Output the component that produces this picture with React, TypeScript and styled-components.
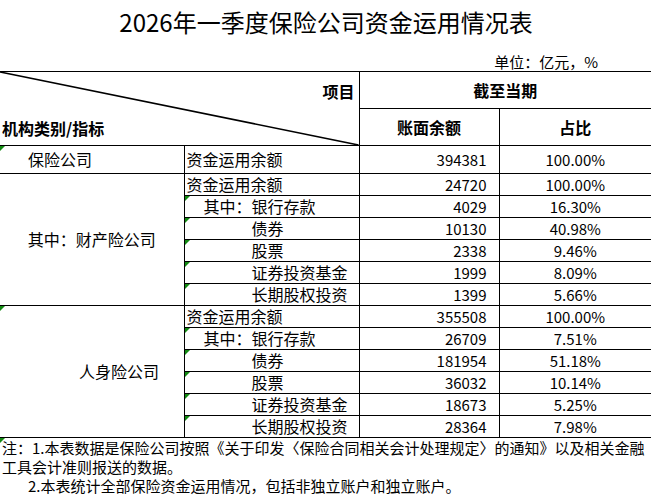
import React from 'react';
import styled, { createGlobalStyle } from 'styled-components';

type Item = { name: string; indent: number; amount: number; share: string; flag?: boolean };
type Group = { title: string; titleIndent?: number; flag?: boolean; height: number; rows: Item[] };

const GlobalStyle = createGlobalStyle`
  html, body {
    margin: 0;
    padding: 0;
    background: #ffffff;
  }
`;

const groups: Group[] = [
  {
    title: '保险公司',
    titleIndent: 28,
    flag: true,
    height: 28,
    rows: [{ name: '资金运用余额', indent: 2, amount: 394381, share: '100.00%' }],
  },
  {
    title: '其中：财产险公司',
    height: 22,
    rows: [
      { name: '资金运用余额', indent: 2, amount: 24720, share: '100.00%' },
      { name: '其中：银行存款', indent: 19, amount: 4029, share: '16.30%', flag: true },
      { name: '债券', indent: 67, amount: 10130, share: '40.98%', flag: true },
      { name: '股票', indent: 67, amount: 2338, share: '9.46%', flag: true },
      { name: '证券投资基金', indent: 67, amount: 1999, share: '8.09%', flag: true },
      { name: '长期股权投资', indent: 67, amount: 1399, share: '5.66%', flag: true },
    ],
  },
  {
    title: '人身险公司',
    titleIndent: 79,
    flag: true,
    height: 22,
    rows: [
      { name: '资金运用余额', indent: 2, amount: 355508, share: '100.00%' },
      { name: '其中：银行存款', indent: 19, amount: 26709, share: '7.51%', flag: true },
      { name: '债券', indent: 67, amount: 181954, share: '51.18%', flag: true },
      { name: '股票', indent: 67, amount: 36032, share: '10.14%', flag: true },
      { name: '证券投资基金', indent: 67, amount: 18673, share: '5.25%', flag: true },
      { name: '长期股权投资', indent: 67, amount: 28364, share: '7.98%', flag: true },
    ],
  },
];

const App: React.FC = () => (
  <Page>
    <GlobalStyle />
    <Title>2026年一季度保险公司资金运用情况表</Title>
    <Unit>单位：亿元，%</Unit>
    <Sheet>
      <colgroup>
        <col style={{ width: 184 }} />
        <col style={{ width: 175 }} />
        <col style={{ width: 140 }} />
        <col style={{ width: 152 }} />
      </colgroup>
      <tbody>
        <Row $h={37}>
          <Corner rowSpan={2} colSpan={2}>
            <Diagonal viewBox='0 0 100 100' preserveAspectRatio='none'>
              <line x1='0' y1='0' x2='100' y2='100' stroke='#000' strokeWidth='1.6' vectorEffect='non-scaling-stroke' />
            </Diagonal>
            <CornerLabels>
              <span className='item'>项目</span>
              <span className='kind'>机构类别/指标</span>
            </CornerLabels>
          </Corner>
          <HeadCell colSpan={2} $last>截至当期</HeadCell>
        </Row>
        <Row $h={37}>
          <HeadCell>账面余额</HeadCell>
          <HeadCell $last>占比</HeadCell>
        </Row>
        {groups.map((group) =>
          group.rows.map((item, i) => (
            <Row key={group.title + item.name} $h={group.height}>
              {i === 0 && (
                <NameCell rowSpan={group.rows.length} $indent={group.titleIndent} $flag={group.flag}>
                  {group.title}
                </NameCell>
              )}
              <ItemCell $indent={item.indent} $flag={item.flag}>
                {item.name}
              </ItemCell>
              <NumCell>{item.amount}</NumCell>
              <PctCell>{item.share}</PctCell>
            </Row>
          ))
        )}
      </tbody>
    </Sheet>
    <Notes>
      <NoteLine $indent={2}>注：1.本表数据是保险公司按照《关于印发〈保险合同相关会计处理规定〉的通知》以及相关金融</NoteLine>
      <NoteLine $indent={2}>工具会计准则报送的数据。</NoteLine>
      <NoteLine $indent={28}>2.本表统计全部保险资金运用情况，包括非独立账户和独立账户。</NoteLine>
    </Notes>
  </Page>
);

export default App;

const Page = styled.div`
  width: 652px;
  height: 502px;
  overflow: hidden;
  background: #ffffff;
  color: #000000;
  font-family: 'Noto Sans CJK SC', 'Noto Sans', sans-serif;
`;

const Title = styled.div`
  height: 44px;
  line-height: 44px;
  font-size: 24px;
  text-align: center;
  white-space: nowrap;
`;

const Unit = styled.div`
  height: 27px;
  display: flex;
  align-items: flex-end;
  justify-content: flex-end;
  padding-right: 54px;
  font-size: 15px;
  line-height: 18px;
  box-sizing: border-box;
`;

const Sheet = styled.table`
  width: 651px;
  border-collapse: collapse;
  table-layout: fixed;
  font-size: 16px;
`;

const Row = styled.tr<{ $h: number }>`
  height: ${({ $h }) => $h}px;
`;

const Cell = styled.td<{ $flag?: boolean; $last?: boolean }>`
  position: relative;
  padding: 0;
  border: 1px solid #000;
  border-right: ${({ $last }) => ($last ? 'none' : '1px solid #000')};
  white-space: nowrap;
  line-height: 17px;

  &::before {
    content: '';
    display: ${({ $flag }) => ($flag ? 'block' : 'none')};
    position: absolute;
    left: 0;
    top: 0;
    width: 0;
    height: 0;
    border-top: 5px solid #138a13;
    border-right: 5px solid transparent;
  }
`;

const Corner = styled(Cell)`
  border-left: none;
  vertical-align: top;
  font-weight: bold;
`;

const Diagonal = styled.svg`
  position: absolute;
  inset: 0;
  width: 100%;
  height: 100%;
`;

const CornerLabels = styled.div`
  height: 73px;
  display: flex;
  flex-direction: column;
  justify-content: space-between;
  padding: 11px 4px 8px 2px;
  box-sizing: border-box;

  .item {
    align-self: flex-end;
  }

  .kind {
    align-self: flex-start;
  }
`;

const HeadCell = styled(Cell)`
  font-weight: bold;
  text-align: center;
`;

const NameCell = styled(Cell)<{ $indent?: number }>`
  border-left: none;
  text-align: ${({ $indent }) => ($indent === undefined ? 'center' : 'left')};
  padding-left: ${({ $indent }) => $indent ?? 0}px;
`;

const ItemCell = styled(Cell)<{ $indent: number }>`
  padding-left: ${({ $indent }) => $indent}px;
`;

const NumCell = styled(Cell)`
  text-align: right;
  padding-right: 12px;
  font-size: 15px;
`;

const PctCell = styled(Cell)`
  text-align: center;
  font-size: 15px;
  border-right: none;
`;

const Notes = styled.div`
  position: relative;
  font-size: 15px;
  line-height: 19px;

  &::before {
    content: '';
    position: absolute;
    left: 0;
    top: 0;
    border-top: 5px solid #138a13;
    border-right: 5px solid transparent;
  }
`;

const NoteLine = styled.div<{ $indent: number }>`
  padding-left: ${({ $indent }) => $indent}px;
  white-space: nowrap;
`;
